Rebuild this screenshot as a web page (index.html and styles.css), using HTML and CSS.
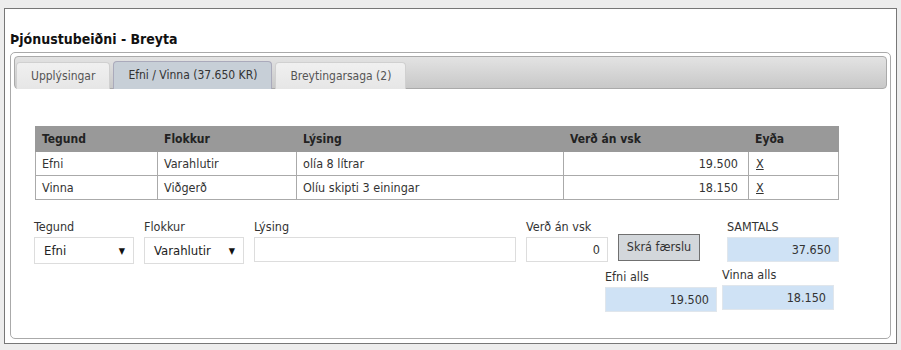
FILE: index.html
```html
<!DOCTYPE html>
<html lang="is">
<head>
<meta charset="utf-8">
<title>Þjónustubeiðni - Breyta</title>
<link rel="stylesheet" href="styles.css">
</head>
<body>
<div class="page">
  <h1 class="title">Þjónustubeiðni - Breyta</h1>
  <div class="tabs">
    <ul class="tabnav">
      <li class="tab">Upplýsingar</li>
      <li class="tab active">Efni / Vinna (37.650 KR)</li>
      <li class="tab">Breytingarsaga (2)</li>
    </ul>
    <div class="panel">
      <table class="items">
        <thead>
          <tr>
            <th class="c-teg">Tegund</th>
            <th class="c-flo">Flokkur</th>
            <th class="c-lys">Lýsing</th>
            <th class="c-ver">Verð án vsk</th>
            <th class="c-eyd">Eyða</th>
          </tr>
        </thead>
        <tbody>
          <tr>
            <td>Efni</td>
            <td>Varahlutir</td>
            <td>olía 8 lítrar</td>
            <td class="num">19.500</td>
            <td><a class="del" href="#">X</a></td>
          </tr>
          <tr>
            <td>Vinna</td>
            <td>Viðgerð</td>
            <td>Olíu skipti 3 einingar</td>
            <td class="num">18.150</td>
            <td><a class="del" href="#">X</a></td>
          </tr>
        </tbody>
      </table>

      <div class="form-row">
        <div class="field f-teg">
          <label class="lbl">Tegund</label>
          <div class="select"><span>Efni</span><span class="arrow">▼</span></div>
        </div>
        <div class="field f-flo">
          <label class="lbl">Flokkur</label>
          <div class="select"><span>Varahlutir</span><span class="arrow">▼</span></div>
        </div>
        <div class="field f-lys">
          <label class="lbl">Lýsing</label>
          <div class="input"></div>
        </div>
        <div class="field f-ver">
          <label class="lbl">Verð án vsk</label>
          <div class="input num-in">0</div>
        </div>
        <div class="field f-btn">
          <button class="btn" type="button">Skrá færslu</button>
        </div>
        <div class="field f-sam">
          <label class="lbl">SAMTALS</label>
          <div class="total">37.650</div>
        </div>
      </div>

      <div class="totals-row">
        <div class="field f-efni">
          <label class="lbl">Efni alls</label>
          <div class="total">19.500</div>
        </div>
        <div class="field f-vinna">
          <label class="lbl">Vinna alls</label>
          <div class="total">18.150</div>
        </div>
      </div>
    </div>
  </div>
</div>
</body>
</html>
```

FILE: styles.css
```css
* { box-sizing: border-box; }

html, body {
  margin: 0;
  padding: 0;
  background: #ededed;
  font-family: "DejaVu Sans Condensed", "DejaVu Sans", Verdana, sans-serif;
  font-stretch: condensed;
  font-size: 12px;
  color: #333;
}

.page {
  margin: 8px 4px 0 4px;
  width: 893px;
  height: 336px;
  background: #fff;
  border: 1px solid #777;
  padding: 0 5px;
}

.title {
  margin: 22px 0 0 0;
  font-size: 14px;
  line-height: 17px;
  font-weight: bold;
  color: #111;
}

.tabs {
  margin-top: 4px;
  height: 287px;
  border: 1px solid #aaa;
  border-radius: 5px;
  padding: 3px;
}

.tabnav {
  list-style: none;
  margin: 0;
  height: 33px;
  padding: 0 0 0 1px;
  display: flex;
  align-items: flex-end;
  gap: 3px;
  border: 1px solid #aaa;
  border-radius: 4px;
  background: linear-gradient(#e3e3e3, #c8c8c8);
}

.tab {
  height: 27px;
  margin-bottom: -1px;
  padding: 0 14px;
  line-height: 26px;
  border: 1px solid #d0d0d0;
  border-bottom: none;
  border-radius: 4px 4px 0 0;
  background: linear-gradient(#f0f0f0, #e6e6e6);
  color: #555;
}

.tab.active {
  background: #c7cfd7;
  border-color: #aab;
  color: #333;
  height: 28px;
  line-height: 27px;
}

.panel {
  padding: 37px 0 0 21px;
}

.items {
  width: 804px;
  border-collapse: collapse;
  border: 1px solid #aaa;
}

.items th {
  background: #999;
  color: #222;
  font-weight: bold;
  text-align: left;
  height: 25px;
  padding: 0 6px;
  border: 1px solid #999;
}

.items td {
  height: 24px;
  padding: 0 6px;
  border: 1px solid #aaa;
  color: #333;
  font-size: 12.5px;
}

.items .c-teg { width: 122px; }
.items .c-flo { width: 139px; }
.items .c-lys { width: 267px; }
.items .c-ver { width: 185px; }
.items .c-eyd { width: 90px; }

.items td.num { text-align: right; padding-right: 10px; }

.del {
  color: #333;
  text-decoration: underline;
  margin-left: 1px;
}

.form-row {
  display: flex;
  align-items: flex-start;
  margin-top: 19px;
  margin-left: -1px;
}

.field { display: flex; flex-direction: column; }

.lbl {
  display: block;
  line-height: 15px;
  height: 15px;
  margin-bottom: 3px;
  color: #333;
  font-size: 12.5px;
}

.select {
  height: 27px;
  border: 1px solid #ddd;
  display: flex;
  align-items: center;
  justify-content: space-between;
  padding: 0 8px 0 9px;
  font-size: 13px;
  color: #222;
}

.arrow { font-size: 9px; color: #111; }

.f-teg { width: 100px; }
.f-flo { width: 100px; margin-left: 10px; }
.f-lys { width: 262px; margin-left: 10px; }
.f-ver { width: 82px; margin-left: 10px; }
.f-btn { margin-left: 10px; padding-top: 15px; }
.f-sam { width: 112px; margin-left: 27px; }

.input {
  height: 25px;
  border: 1px solid #ddd;
  background: #fff;
}

.num-in {
  text-align: right;
  padding-right: 7px;
  line-height: 23px;
  font-size: 12.5px;
}

.btn {
  width: 82px;
  height: 27px;
  margin: 0;
  padding: 0 0 3px 0;
  border: 1px solid #707070;
  background: #d3d7db;
  font-family: inherit;
  font-stretch: condensed;
  font-size: 12.5px;
  color: #333;
}

.total {
  height: 25px;
  border: 1px solid #e0e6ec;
  background: #cfe2f5;
  text-align: right;
  padding-right: 7px;
  line-height: 24px;
  color: #333;
  font-size: 12.5px;
}

.totals-row {
  display: flex;
  align-items: flex-start;
  margin-left: 570px;
  margin-top: 3px;
}

.f-efni { width: 112px; padding-top: 2px; }
.f-vinna { width: 112px; margin-left: 5px; }
```
